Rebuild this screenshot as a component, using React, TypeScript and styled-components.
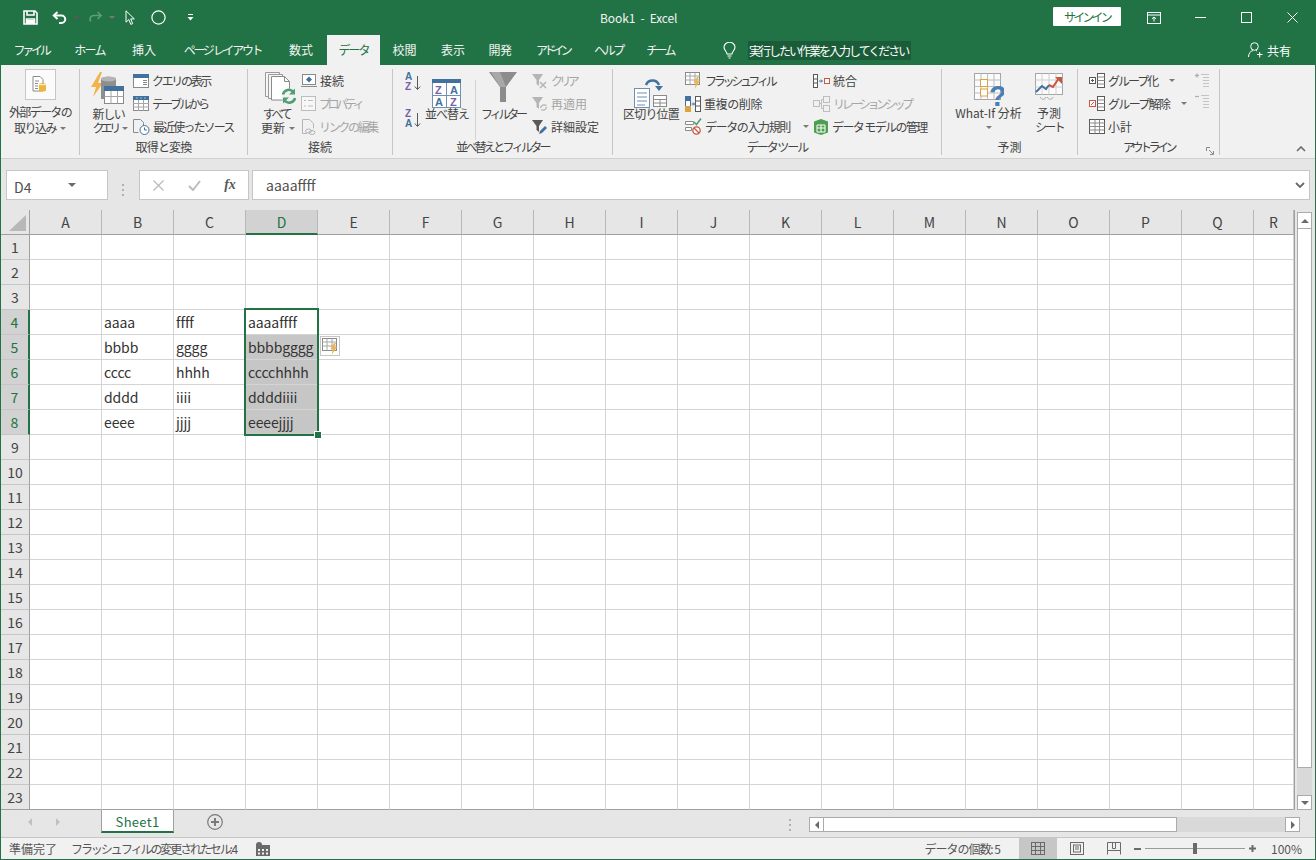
import React from "react";
import styled, { createGlobalStyle } from "styled-components";

const GREEN = "#217346";
const INK = "#444444";
const OFF = "#a6a6a6";

const Global = createGlobalStyle`
  html, body { margin: 0; padding: 0; background: #fff; }
  * { box-sizing: border-box; }
  body { font-family: "Noto Sans CJK JP", "Noto Sans", sans-serif; font-size: 12px; color: ${INK}; overflow: hidden; }
  svg { display: block; flex: none; }
`;

// squeezes the CJK fallback down to the narrow kana widths of the original UI font
const track = (text: string, target: number) => {
  let natural = 0;
  for (const ch of text) natural += ch === " " ? 3 : ch.charCodeAt(0) < 128 ? 6.6 : 12;
  return (target - natural) / text.length;
};

const Txt = styled.span<{ $ls: number; $off?: boolean; $c?: string }>`
  letter-spacing: ${p => p.$ls.toFixed(2)}px;
  white-space: pre;
  color: ${p => (p.$off ? OFF : p.$c || "inherit")};
`;

const Fit: React.FC<{ t: string; w: number; off?: boolean; c?: string }> = ({ t, w, off, c }) => (
  <Txt $ls={track(t, w)} $off={off} $c={c}>{t}</Txt>
);

const Window = styled.div`
  width: 1316px;
  height: 860px;
  display: flex;
  flex-direction: column;
  border: 1px solid ${GREEN};
  border-top: 0;
  overflow: hidden;
  background: #e6e6e6;
`;

/* ---------- title bar ---------- */
const TitleBar = styled.div`
  height: 35px;
  background: ${GREEN};
  display: flex;
  align-items: center;
  color: #fff;
  flex: none;
`;
const Qat = styled.div`
  width: 599px;
  display: flex;
  align-items: center;
  padding-left: 22px;
`;
const QatSlot = styled.div<{ $w: number }>`
  width: ${p => p.$w}px;
  display: flex;
  align-items: center;
`;
const Title = styled.div`
  width: 82px;
  font-size: 12px;
  white-space: pre;
  letter-spacing: -0.1px;
  color: #f2f2f2;
`;
const TitleRight = styled.div`
  flex: 1;
  display: flex;
  justify-content: flex-end;
  align-items: center;
`;
const SignIn = styled.div`
  width: 68px;
  height: 19px;
  margin-right: 10px;
  background: #fff;
  border-radius: 1px;
  display: flex;
  align-items: center;
  justify-content: center;
  line-height: 19px;
  margin-top: -2px;
`;
const Caption = styled.div`
  width: 46px;
  height: 35px;
  display: flex;
  align-items: center;
  justify-content: center;
`;

/* ---------- tabs ---------- */
const TabRow = styled.div`
  height: 30px;
  background: ${GREEN};
  display: flex;
  flex: none;
  align-items: stretch;
  color: #fff;
`;
const Tab = styled.div<{ $w: number; $active?: boolean }>`
  width: ${p => p.$w}px;
  display: flex;
  align-items: center;
  justify-content: center;
  line-height: 30px;
  color: ${p => (p.$active ? GREEN : "#f4f4f4")};
  background: ${p => (p.$active ? "#f1f1f1" : "transparent")};
`;
const TellSlot = styled.div`
  display: flex;
  align-items: center;
  margin-left: 38px;
`;
const TellBox = styled.div`
  margin-left: 12px;
  width: 163px;
  height: 19px;
  line-height: 19px;
  background: #1a5c38;
  padding-left: 1px;
  color: #fff;
`;
const ShareSlot = styled.div`
  margin-left: auto;
  margin-right: 24px;
  display: flex;
  align-items: center;
  gap: 4px;
`;

/* ---------- ribbon ---------- */
const Ribbon = styled.div`
  height: 94px;
  flex: none;
  display: flex;
  background: #f1f1f1;
  border-bottom: 1px solid #d0d0d0;
  padding-top: 4px;
`;
const Group = styled.div<{ $w: number }>`
  width: ${p => p.$w}px;
  height: 86px;
  flex: none;
  border-right: 1px solid #c6c6c6;
  display: flex;
  flex-direction: column;
  position: relative;
`;
const GroupBody = styled.div<{ $pl?: number }>`
  height: 70px;
  display: flex;
  padding-left: ${p => p.$pl || 0}px;
`;
const GroupLabel = styled.div`
  height: 16px;
  line-height: 16px;
  margin-top: 0;
  text-align: center;
`;
const Launcher = styled.div`
  position: absolute;
  right: 5px;
  bottom: 0;
`;
const Large = styled.div<{ $w: number; $ml?: number; $iconH?: number }>`
  width: ${p => p.$w}px;
  margin-left: ${p => p.$ml || 0}px;
  display: flex;
  flex-direction: column;
  align-items: center;
  flex: none;
`;
const LargeIcon = styled.div<{ $h?: number; $pt?: number; $dx?: number }>`
  height: ${p => p.$h || 38}px;
  padding-top: ${p => p.$pt ?? 3}px;
  margin-left: ${p => p.$dx || 0}px;
`;
const LargeLine = styled.div<{ $dx?: number; $lh?: number }>`
  height: ${p => p.$lh || 14}px;
  line-height: ${p => p.$lh || 14}px;
  display: flex;
  align-items: center;
  gap: 4px;
  white-space: pre;
  margin-left: ${p => p.$dx || 0}px;
`;
const ImportBox = styled.div`
  width: 31px;
  height: 31px;
  background: #fbfbfb;
  border: 1px solid #c6c6c6;
  display: flex;
  align-items: center;
  justify-content: center;
  margin-bottom: 4px;
`;
const SmallCol = styled.div<{ $w?: number; $ml?: number }>`
  width: ${p => (p.$w ? `${p.$w}px` : "auto")};
  margin-left: ${p => p.$ml || 0}px;
  display: flex;
  flex-direction: column;
  padding-top: 0;
  flex: none;
`;
const SmallRow = styled.div`
  height: 23px;
  display: flex;
  align-items: center;
  gap: 3px;
  white-space: pre;
`;
const SortCol = styled.div`
  width: 16px;
  margin-left: 12px;
  margin-right: 4px;
  display: flex;
  flex-direction: column;
  gap: 15px;
  padding-top: 2px;
`;
const VRule = styled.div`
  width: 1px;
  height: 60px;
  margin: 11px 5px 0 6px;
  background: #d4d4d4;
`;
const MiniCol = styled.div`
  display: flex;
  flex-direction: column;
  gap: 7px;
  padding-top: 4px;
`;
const Arrow = styled.i<{ $ml?: number; $dark?: boolean }>`
  display: block;
  width: 0;
  height: 0;
  margin-left: ${p => p.$ml || 0}px;
  border-left: 3px solid transparent;
  border-right: 3px solid transparent;
  border-top: 3px solid ${p => (p.$dark ? "#595959" : "#7a7a7a")};
`;
const RibbonTail = styled.div`
  flex: 1;
  display: flex;
  justify-content: flex-end;
  align-items: flex-end;
  padding: 0 9px 3px 0;
  height: 86px;
`;

/* ---------- formula bar ---------- */
const FormulaBar = styled.div`
  height: 51px;
  flex: none;
  display: flex;
  padding: 11px 5px 0 5px;
  background: #e6e6e6;
`;
const FieldBox = styled.div<{ $w?: number }>`
  width: ${p => (p.$w ? `${p.$w}px` : "auto")};
  flex: ${p => (p.$w ? "none" : 1)};
  height: 30px;
  background: #fff;
  border: 1px solid #c6c6c6;
  display: flex;
  align-items: center;
`;
const NameText = styled.div`
  font-size: 14px;
  line-height: 30px;
  padding: 3px 0 0 7px;
  flex: 1;
  color: #505050;
`;
const Grip = styled.div`
  width: 31px;
  display: flex;
  justify-content: center;
  align-items: center;
`;
const FxSlot = styled.div<{ $w: number }>`
  width: ${p => p.$w}px;
  display: flex;
  justify-content: center;
`;
const FxGlyph = styled.span`
  font-family: "Liberation Serif", serif;
  font-style: italic;
  font-size: 14px;
  font-weight: 700;
  color: #595959;
  line-height: 18px;
`;
const FormulaText = styled.div`
  flex: 1;
  font-size: 14px;
  line-height: 30px;
  padding: 0 0 0 13px;
  color: #505050;
`;

/* ---------- sheet ---------- */
const SheetArea = styled.div`
  height: 600px;
  flex: none;
  display: flex;
  background: #e6e6e6;
`;
const Grid = styled.div`
  width: 1294px;
  flex: none;
  position: relative;
  overflow: hidden;
  display: grid;
  grid-template-columns: 29px repeat(17, 72px) 40px;
  grid-template-rows: 25px repeat(23, 25px);
  font-size: 14px;
  background: #fff;
  border-right: 1px solid #a0a0a0;
`;
const Corner = styled.div`
  background: #e6e6e6;
  border-right: 1px solid #a0a0a0;
  border-bottom: 1px solid #a0a0a0;
  display: flex;
  align-items: flex-end;
  justify-content: flex-end;
  padding: 0 3px 3px 0;
`;
const ColHead = styled.div<{ $sel?: boolean }>`
  background: ${p => (p.$sel ? "#d2d2d2" : "#e6e6e6")};
  color: ${p => (p.$sel ? GREEN : "#444")};
  border-right: 1px solid #b8b8b8;
  border-bottom: ${p => (p.$sel ? `2px solid ${GREEN}` : "1px solid #a0a0a0")};
  text-align: center;
  line-height: 24px;
  height: 25px;
`;
const RowHead = styled.div<{ $sel?: boolean; $last?: boolean }>`
  background: ${p => (p.$sel ? "#d2d2d2" : "#e6e6e6")};
  color: ${p => (p.$sel ? GREEN : "#444")};
  border-right: ${p => (p.$sel ? `2px solid ${GREEN}` : "1px solid #a0a0a0")};
  border-bottom: 1px solid ${p => (p.$last ? "#a0a0a0" : "#c6c6c6")};
  text-align: center;
  line-height: 24px;
`;
const Cell = styled.div<{ $fill?: boolean; $last?: boolean }>`
  background: ${p => (p.$fill ? "#c6c6c6" : "#fff")};
  border-right: 1px solid #d4d4d4;
  border-bottom: 1px solid ${p => (p.$last ? "#a0a0a0" : "#d4d4d4")};
  padding-left: 2px;
  line-height: 25px;
  color: #333;
  overflow: visible;
  white-space: pre;
  letter-spacing: -0.1px;
`;
const Selection = styled.div`
  position: absolute;
  left: 243px;
  top: 98px;
  width: 75px;
  height: 128px;
  border: 2px solid ${GREEN};
  pointer-events: none;
`;
const Handle = styled.div`
  position: absolute;
  right: -4px;
  bottom: -4px;
  width: 6px;
  height: 6px;
  background: ${GREEN};
  border: 1px solid #fff;
  box-sizing: content-box;
  margin: -1px;
`;
const FlashTag = styled.div`
  position: absolute;
  left: 319px;
  top: 126px;
  width: 20px;
  height: 20px;
  background: #fff;
  border: 1px solid #c6c6c6;
  display: flex;
  align-items: center;
  justify-content: center;
`;
const VScroll = styled.div`
  width: 15px;
  margin-left: 2px;
  padding-top: 2px;
  display: flex;
  flex-direction: column;
`;
const ScrollBtn = styled.div<{ $w?: number; $h?: number }>`
  width: ${p => p.$w || 15}px;
  height: ${p => p.$h || 15}px;
  background: #fff;
  border: 1px solid #ababab;
  display: flex;
  align-items: center;
  justify-content: center;
  flex: none;
`;
const VThumb = styled.div`
  height: 539px;
  background: #fff;
  border: 1px solid #ababab;
  border-top: 0;
  flex: none;
`;
const VTrack = styled.div`
  flex: 1;
  background: #d9d9d9;
`;
const Tri = styled.i<{ $dir: "up" | "down" | "left" | "right"; $c?: string }>`
  display: block;
  width: 0;
  height: 0;
  border-style: solid;
  border-color: transparent;
  ${p => {
    const c = p.$c || "#6a6a6a";
    if (p.$dir === "up") return `border-width:0 4px 4px 4px;border-bottom-color:${c};`;
    if (p.$dir === "down") return `border-width:4px 4px 0 4px;border-top-color:${c};`;
    if (p.$dir === "left") return `border-width:4px 4px 4px 0;border-right-color:${c};`;
    return `border-width:4px 0 4px 4px;border-left-color:${c};`;
  }}
`;

/* ---------- sheet tabs ---------- */
const TabStrip = styled.div`
  height: 28px;
  flex: none;
  display: flex;
  align-items: flex-start;
  background: #e6e6e6;
  border-bottom: 1px solid #c6c6c6;
`;
const NavSlot = styled.div`
  width: 100px;
  height: 24px;
  display: flex;
  align-items: center;
  padding-left: 27px;
  gap: 24px;
`;
const SheetTab = styled.div`
  width: 73px;
  height: 24px;
  background: #fff;
  border-bottom: 2px solid ${GREEN};
  border-left: 1px solid #a0a0a0;
  border-right: 1px solid #a0a0a0;
  color: ${GREEN};
  font-size: 13px;
  line-height: 25px;
  letter-spacing: 0.3px;
  text-align: center;
  margin-top: -1px;
`;
const AddSlot = styled.div`
  width: 614px;
  height: 24px;
  padding-left: 33px;
  display: flex;
  align-items: center;
`;
const HScroll = styled.div`
  margin-top: 7px;
  width: 491px;
  height: 15px;
  margin-left: 17px;
  display: flex;
  background: #d9d9d9;
`;
const HThumb = styled.div`
  width: 353px;
  background: #fff;
  border: 1px solid #ababab;
  border-left: 0;
`;
const HGap = styled.div`
  flex: 1;
`;
const DotGrip = styled.div`
  height: 24px;
  display: flex;
  align-items: center;
  padding-top: 7px;
  margin-left: 1px;
`;

/* ---------- status bar ---------- */
const StatusBar = styled.div`
  flex: 1;
  display: flex;
  align-items: center;
  background: #f1f1f1;
  padding-left: 8px;
  color: #555;
`;
const StatusMsg = styled.div`
  margin-left: 14px;
  margin-right: 20px;
`;
const StatusCount = styled.div`
  margin-left: auto;
  margin-right: 19px;
`;
const ViewBtn = styled.div<{ $on?: boolean; $w: number }>`
  width: ${p => p.$w}px;
  height: 21px;
  background: ${p => (p.$on ? "#c6c6c6" : "transparent")};
  display: flex;
  align-items: center;
  justify-content: center;
`;
const ZoomBox = styled.div`
  width: 129px;
  margin-left: 2px;
  display: flex;
  align-items: center;
`;
const ZoomTrack = styled.div`
  width: 100px;
  height: 1px;
  background: #9a9a9a;
  margin: 0 4px;
  position: relative;
`;
const ZoomThumb = styled.div`
  position: absolute;
  left: 48px;
  top: -5px;
  width: 4px;
  height: 11px;
  background: #6a6a6a;
`;
const ZoomPct = styled.div`
  width: 52px;
  padding-left: 8px;
  font-size: 12px;
`;

/* ---------- icons ---------- */
const SaveIcon = () => (
  <svg width="15" height="15" viewBox="0 0 15 15" fill="none" stroke="#fff" strokeWidth="1.6">
    <path d="M1 1h11l2 2v11H1z" />
    <path d="M4 1v4h7V1M3.5 14V9h8v5" fill="none" />
    <path d="M3 10h9v4H3z" fill="#fff" stroke="none" />
  </svg>
);
const UndoIcon = ({ c = "#fff" }: { c?: string }) => (
  <svg width="15" height="13" viewBox="0 0 15 13" fill="none" stroke={c} strokeWidth="2">
    <path d="M5.5 1 1.8 4.5 5.5 8" />
    <path d="M2 4.5h7.5a3.6 3.6 0 0 1 0 7.5H7" />
  </svg>
);
const RedoIcon = () => (
  <svg width="15" height="13" viewBox="0 0 15 13" fill="none" stroke="#5f9c7d" strokeWidth="1.6">
    <path d="M9.5 1 13.2 4.5 9.5 8" />
    <path d="M13 4.5H6a3.6 3.6 0 0 0-3 6" />
  </svg>
);
const CursorIcon = () => (
  <svg width="11" height="16" viewBox="0 0 11 16" fill="none" stroke="#fff" strokeWidth="1">
    <path d="M1 .8v11.4l2.8-2.6 2 4.8 1.9-.8-2-4.7h3.6z" />
  </svg>
);
const CircleIcon = () => (
  <svg width="15" height="15" viewBox="0 0 15 15" fill="none" stroke="#fff" strokeWidth="1.2">
    <circle cx="7.5" cy="7.5" r="6.6" />
  </svg>
);
const CustomizeIcon = () => (
  <svg width="7" height="7" viewBox="0 0 7 7" fill="#fff">
    <rect x="1" y="0" width="5" height="1" />
    <path d="M0.5 3h6L3.5 6.5z" />
  </svg>
);
const RibbonModeIcon = () => (
  <svg width="14" height="12" viewBox="0 0 14 12" fill="none" stroke="#fff">
    <rect x=".5" y=".5" width="13" height="11" />
    <path d="M.5 3h13M7 9.5V5M5 6.8 7 5l2 1.8" />
  </svg>
);
const MinIcon = () => (
  <svg width="11" height="3" viewBox="0 0 11 3" stroke="#fff"><path d="M0 1.5h11" /></svg>
);
const MaxIcon = () => (
  <svg width="11" height="11" viewBox="0 0 11 11" fill="none" stroke="#fff"><rect x=".5" y=".5" width="10" height="10" /></svg>
);
const CloseIcon = () => (
  <svg width="11" height="11" viewBox="0 0 11 11" fill="none" stroke="#fff"><path d="M.5.5l10 10M10.5.5l-10 10" /></svg>
);
const BulbIcon = () => (
  <svg width="13" height="17" viewBox="0 0 13 17" fill="none" stroke="#fff" strokeWidth="1.1">
    <path d="M4 12c0-2.5-3-3.6-3-6.7a5.5 5 0 0 1 11 0C12 8.400 9 9.500 9 12z" />
    <path d="M4.500 14h4M5.500 16h2" />
  </svg>
);
const ShareIcon = () => (
  <svg width="15" height="16" viewBox="0 0 15 16" fill="none" stroke="#fff" strokeWidth="1">
    <circle cx="6.500" cy="4.500" r="3.800" />
    <path d="M.5 15c0-3.500 2-6 4.500-6.500M8 8.500l1 .4M9 12.500h5.500M11.700 10v5.500" />
  </svg>
);
const ImportIcon = () => (
  <svg width="16" height="17" viewBox="0 0 16 17" fill="none">
    <path d="M1 .5h7l3 3V15H1z" fill="#fff" stroke="#8a8a8a" />
    <path d="M3 5h4M3 7.500h3M3 10h3M3 12.500h3" stroke="#8a8a8a" />
    <path d="M7 8c0-1 7-1 7 0v6.500c0 1.200-7 1.200-7 0z" fill="#f2b33d" />
    <path d="M7 8c0 1 7 1 7 0" stroke="#fff" />
  </svg>
);
const NewQueryIcon = () => (
  <svg width="33" height="34" viewBox="0 0 33 34" fill="none">
    <path d="M9 0 0 15h5l-3 10 10-14H7l4-11z" fill="#f0b44a" />
    <path d="M10 7c0-3 15-3 15 0v20H10z" fill="#8f8f8f" />
    <ellipse cx="17.500" cy="7" rx="7.500" ry="2.500" fill="#b5b5b5" />
    <rect x="13.500" y="14.500" width="19" height="17" fill="#fff" stroke="#8a8a8a" />
    <rect x="13" y="14" width="20" height="5" fill="#41719c" />
    <path d="M13.500 24.500h19M20 19v12.500M26.500 19v12.500" stroke="#a6a6a6" />
  </svg>
);
const ShowQueryIcon = () => (
  <svg width="16" height="14" viewBox="0 0 16 14" fill="none">
    <rect x=".5" y=".5" width="15" height="13" fill="#fff" stroke="#8a8a8a" />
    <rect x="0" y="0" width="16" height="4" fill="#41719c" />
    <path d="M10 6.500h4M10 8.500h4M10 10.500h4" stroke="#8a8a8a" />
  </svg>
);
const FromTableIcon = () => (
  <svg width="16" height="15" viewBox="0 0 16 15" fill="none">
    <rect x=".5" y=".5" width="15" height="14" fill="#fff" stroke="#8a8a8a" />
    <rect x="0" y="0" width="16" height="4" fill="#41719c" />
    <path d="M3.500 2h1M7.500 2h1M11.500 2h1" stroke="#fff" />
    <path d="M0 7.500h16M0 11h16M5.500 4v11M10.500 4v11" stroke="#a6a6a6" />
  </svg>
);
const RecentIcon = () => (
  <svg width="17" height="16" viewBox="0 0 17 16" fill="none">
    <path d="M.5.5h7l3 3v5M.5.5v13h5" stroke="#8a8a8a" />
    <circle cx="11.500" cy="11" r="4.500" fill="#fff" stroke="#41719c" />
    <path d="M11.500 8.500V11h2.300" stroke="#41719c" />
  </svg>
);
const RefreshAllIcon = () => (
  <svg width="31" height="34" viewBox="0 0 31 34" fill="none">
    <path d="M.5.5h14v24H.5z" fill="#f6f6f6" stroke="#9a9a9a" />
    <path d="M3.500 2.500h14v24h-14z" fill="#f6f6f6" stroke="#9a9a9a" />
    <path d="M6.500 4.500h13l5 5V28h-18z" fill="#fff" stroke="#8a8a8a" />
    <path d="M19.500 4.500v5h5" stroke="#8a8a8a" />
    <circle cx="24" cy="24" r="7.500" fill="#f1f1f1" />
    <path d="M18 22.500a6 6 0 0 1 10.500-2.500M30 26a6 6 0 0 1-10.500 2.500" stroke="#4f9e76" strokeWidth="2.600" />
    <path d="M30 16.500v6h-6zM18 31.500v-6h6z" fill="#4f9e76" />
  </svg>
);
const ConnIcon = () => (
  <svg width="16" height="14" viewBox="0 0 16 14" fill="none">
    <rect x="1.500" y=".5" width="13" height="10" fill="#fff" stroke="#8a8a8a" />
    <path d="M0 12.500h16" stroke="#8a8a8a" />
    <path d="M8 2.500 11 5.500 8 8.500 5 5.500z" fill="#41719c" />
  </svg>
);
const PropsIcon = () => (
  <svg width="15" height="15" viewBox="0 0 15 15" fill="none" stroke="#bdbdbd">
    <rect x=".5" y=".5" width="14" height="14" fill="#f7f7f7" />
    <path d="M3 4.500h2M7 4.500h5M3 10h2M7 10h5" />
  </svg>
);
const EditLinksIcon = () => (
  <svg width="15" height="16" viewBox="0 0 15 16" fill="none" stroke="#b5b5b5">
    <path d="M6 14.500H1.500V.5h7l4 4v5" />
    <ellipse cx="7.500" cy="12" rx="3" ry="2" />
    <ellipse cx="11" cy="13.500" rx="3" ry="2" />
  </svg>
);
const SortAz = ({ flip }: { flip?: boolean }) => {
  const top = flip ? "Z" : "A";
  const bot = flip ? "A" : "Z";
  return (
    <svg width="16" height="22" viewBox="0 0 16 22" fill="none">
      <text x="0" y="9" fontFamily="Liberation Sans" fontSize="10" fontWeight="700" fill={flip ? "#7a5ea8" : "#41719c"}>{top}</text>
      <text x="0" y="19" fontFamily="Liberation Sans" fontSize="10" fontWeight="700" fill={flip ? "#41719c" : "#7a5ea8"}>{bot}</text>
      <path d="M12.500 5v13M9.800 15.500l2.700 3 2.700-3" stroke="#595959" />
    </svg>
  );
};
const SortBigIcon = () => (
  <svg width="30" height="29" viewBox="0 0 30 29" fill="none">
    <rect x=".5" y=".5" width="28" height="28" fill="#fff" stroke="#6f8fb5" />
    <rect x="0" y="0" width="29" height="4" fill="#41719c" />
    <path d="M14.500 4v25M0 16.500h29" stroke="#6f8fb5" />
    <text x="3" y="14.500" fontFamily="Liberation Sans" fontSize="11" fontWeight="700" fill="#7a5ea8">Z</text>
    <text x="18" y="14.500" fontFamily="Liberation Sans" fontSize="11" fontWeight="700" fill="#41719c">A</text>
    <text x="3" y="27" fontFamily="Liberation Sans" fontSize="11" fontWeight="700" fill="#41719c">A</text>
    <text x="18" y="27" fontFamily="Liberation Sans" fontSize="11" fontWeight="700" fill="#7a5ea8">Z</text>
  </svg>
);
const FunnelIcon = () => (
  <svg width="28" height="30" viewBox="0 0 28 30">
    <path d="M0 0h28L17 15v15h-6V15z" fill="#8c8c8c" />
    <path d="M2 0h9l6 15h-6z" fill="#a8a8a8" />
  </svg>
);
const FilterSmall = ({ kind }: { kind: "clear" | "reapply" | "adv" }) => {
  const c = kind === "adv" ? "#595959" : "#b5b5b5";
  return (
    <svg width="16" height="16" viewBox="0 0 16 16" fill="none">
      <path d="M0 1h11L7 7v6L4.500 11V7z" fill={c} />
      {kind === "clear" && <path d="M8 9l6 6M14 9l-6 6" stroke="#b5b5b5" strokeWidth="1.500" />}
      {kind === "reapply" && <path d="M8.500 12a3.500 3.500 0 0 1 6-2M14.500 11a3.500 3.500 0 0 1-5.500 2.500" stroke="#b5b5b5" strokeWidth="1.300" />}
      {kind === "adv" && <path d="M7 15l1-3 5-5 2 2-5 5z" fill="#41719c" />}
    </svg>
  );
};
const TextToColsIcon = () => (
  <svg width="33" height="31" viewBox="0 0 33 31" fill="none">
    <path d="M12 8a7 7 0 0 1 13 0" stroke="#41719c" strokeWidth="2.500" />
    <path d="M21 9h8l-4 5z" fill="#41719c" />
    <rect x=".5" y="11.500" width="15" height="19" fill="#fff" stroke="#6f8fb5" />
    <path d="M3 16h10M3 20h10M3 24h10M3 28h8" stroke="#6f8fb5" />
    <rect x="19.500" y="18.500" width="13" height="11" fill="#fff" stroke="#8a8a8a" />
    <path d="M19.500 22.500h13M26 22.500v7M19.500 26h13" stroke="#8a8a8a" />
  </svg>
);
const FlashFillIcon = () => (
  <svg width="17" height="17" viewBox="0 0 17 17" fill="none">
    <rect x=".5" y=".5" width="14" height="12" fill="#fff" stroke="#8a8a8a" />
    <path d="M.5 4h14M.5 8h14M5 .5v12M10 .5v12" stroke="#a6a6a6" />
    <path d="M12 5 8.500 11h2.500l-1.500 6 5.500-8H12l2-4z" fill="#f0b44a" />
  </svg>
);
const DupIcon = () => (
  <svg width="16" height="16" viewBox="0 0 16 16" fill="none">
    <rect x=".5" y=".5" width="5" height="15" fill="#fff" stroke="#41719c" />
    <rect x="0" y="0" width="6" height="5" fill="#41719c" />
    <rect x="0" y="10" width="6" height="6" fill="#d9a441" />
    <rect x="10.500" y=".5" width="5" height="15" fill="#fff" stroke="#595959" />
    <path d="M6.500 8h3M8 6.500 9.500 8 8 9.500" stroke="#41719c" />
    <path d="M10.500 5h5M10.500 10h5" stroke="#595959" />
  </svg>
);
const ValidateIcon = () => (
  <svg width="17" height="17" viewBox="0 0 17 17" fill="none">
    <path d="M.5 3.500h8v3h-8zM.5 9.500h6v3h-6z" fill="#fff" stroke="#8a8a8a" />
    <path d="M9 4l2.500 2.500L16 .5" stroke="#4f9e76" strokeWidth="1.500" />
    <circle cx="11.500" cy="12.500" r="3.700" fill="#fff" stroke="#c8553d" strokeWidth="1.300" />
    <path d="M9 10l5 5" stroke="#c8553d" strokeWidth="1.300" />
  </svg>
);
const ConsolidateIcon = () => (
  <svg width="17" height="16" viewBox="0 0 17 16" fill="none">
    <rect x=".5" y="1.500" width="4" height="13" fill="#fff" stroke="#595959" />
    <path d="M.5 6h4M.5 10h4" stroke="#595959" />
    <path d="M6 8h3M8 6.500 9.500 8 8 9.500" stroke="#41719c" />
    <rect x="11.500" y="5.500" width="5" height="5" fill="#fff" stroke="#c8553d" />
  </svg>
);
const RelationIcon = () => (
  <svg width="17" height="16" viewBox="0 0 17 16" fill="none" stroke="#bdbdbd">
    <rect x=".5" y="4.500" width="6" height="6" />
    <rect x="10.500" y=".5" width="6" height="6" />
    <rect x="10.500" y="9.500" width="6" height="6" />
    <path d="M6.500 7.500h2v-4h2M8.500 7.500v5h2" />
  </svg>
);
const ModelIcon = () => (
  <svg width="16" height="16" viewBox="0 0 16 16" fill="none">
    <path d="M8 0l7 2.500v11L8 16l-7-2.500v-11z" fill="#4f9e50" />
    <path d="M4 6h8v7H4zM4 9h8M8 6v7" stroke="#fff" />
  </svg>
);
const WhatIfIcon = () => (
  <svg width="30" height="37" viewBox="0 0 30 37" fill="none">
    <rect x=".5" y=".5" width="26" height="26" fill="#fbfbfb" stroke="#a6a6a6" />
    <path d="M7 .5v26M13.500 .5v26M20 .5v26M.5 7h26M.5 13.500h26M.5 20h26" stroke="#bdbdbd" />
    <rect x="6.500" y="6.500" width="7" height="7" fill="#fff" stroke="#d9a441" />
    <rect x="6.500" y="16" width="7" height="7" fill="#fff" stroke="#d9a441" />
    <text x="15" y="33" fontFamily="Liberation Sans" fontSize="29" fontWeight="700" fill="#4a7fb5">?</text>
  </svg>
);
const ForecastIcon = () => (
  <svg width="29" height="28" viewBox="0 0 29 28" fill="none">
    <rect x=".5" y=".5" width="27" height="21" fill="#fbfbfb" stroke="#a6a6a6" />
    <path d="M7 .5v21M14 .5v21M21 .5v21M.5 7h27M.5 14h27" stroke="#cfcfcf" />
    <path d="M1 19l6-6 4 3 3-4" stroke="#41719c" strokeWidth="2" />
    <path d="M14 12l4 2 6-9" stroke="#c8553d" strokeWidth="2" />
    <path d="M20 4h7v7z" fill="#c8553d" />
    <path d="M5 24c2 3 5 3 6 0M12 24c2 3 5 3 6 0" stroke="#a6a6a6" />
  </svg>
);
const OutlineIcon = ({ kind }: { kind: "group" | "ungroup" | "sub" }) => (
  <svg width="16" height="15" viewBox="0 0 16 15" fill="none">
    {kind !== "sub" ? (
      <>
        <rect x=".5" y="4.500" width="6" height="6" fill={kind === "ungroup" ? "#fff" : "#fff"} stroke={kind === "ungroup" ? "#c8553d" : "#595959"} />
        {kind === "group" ? <path d="M2 7.500h3M3.500 6v3" stroke="#595959" /> : <path d="M2 9l3-3" stroke="#c8553d" />}
        <rect x="8.500" y=".5" width="7" height="14" fill="#fff" stroke="#595959" />
        <path d="M8.500 4h7M8.500 7.500h7M8.500 11h7" stroke="#8a8a8a" />
      </>
    ) : (
      <>
        <rect x=".5" y=".5" width="15" height="14" fill="#fff" stroke="#595959" />
        <path d="M.5 4h15M.5 7.500h15M.5 11h15M6 .5v14M10.500 .5v14" stroke="#8a8a8a" />
      </>
    )}
  </svg>
);
const DetailIcon = () => (
  <svg width="15" height="14" viewBox="0 0 15 14" fill="none" stroke="#c4c4c4">
    <path d="M7 1.500h8M9 4.500h6M9 7.500h6M9 10.500h6M9 13.500h6" />
    <path d="M1 2.500h4M3 .5v4" stroke="#b0b0b0" strokeWidth="1.300" />
  </svg>
);
const HideIcon = () => (
  <svg width="15" height="14" viewBox="0 0 15 14" fill="none" stroke="#c4c4c4">
    <path d="M7 1.500h8M9 4.500h6M9 7.500h6M9 10.500h6M9 13.500h6" />
    <path d="M1 2.500h4" stroke="#b0b0b0" strokeWidth="1.300" />
  </svg>
);
const LauncherIcon = () => (
  <svg width="8" height="8" viewBox="0 0 8 8" fill="none" stroke="#8a8a8a">
    <path d="M.5 4V.5H4M3 3l4 4M7.500 4v3.500H4" />
  </svg>
);
const ChevronUp = ({ c = "#6a6a6a" }: { c?: string }) => (
  <svg width="10" height="6" viewBox="0 0 10 6" fill="none" stroke={c} strokeWidth="1.600"><path d="M1 5l4-4 4 4" /></svg>
);
const ChevronDown = ({ c = "#6a6a6a" }: { c?: string }) => (
  <svg width="10" height="6" viewBox="0 0 10 6" fill="none" stroke={c} strokeWidth="1.800"><path d="M1 1l4 4 4-4" /></svg>
);
const GripIcon = () => (
  <svg width="3" height="13" viewBox="0 0 3 13" fill="#b0b0b0">
    <rect width="2" height="2" y="0" /><rect width="2" height="2" y="5" /><rect width="2" height="2" y="10" />
  </svg>
);
const XIcon = () => (
  <svg width="11" height="11" viewBox="0 0 11 11" fill="none" stroke="#bdbdbd" strokeWidth="1.400"><path d="M.5.5l10 10M10.500.5l-10 10" /></svg>
);
const CheckIcon = () => (
  <svg width="13" height="11" viewBox="0 0 13 11" fill="none" stroke="#bdbdbd" strokeWidth="2"><path d="M1 6l4 4 7-9" /></svg>
);
const CornerIcon = () => (
  <svg width="17" height="16" viewBox="0 0 17 16"><path d="M17 0v16H0z" fill="#b8b8b8" /></svg>
);
const AddIcon = () => (
  <svg width="16" height="16" viewBox="0 0 16 16" fill="none" stroke="#7a7a7a">
    <circle cx="8" cy="8" r="7.300" strokeWidth="1.200" />
    <path d="M8 4v8M4 8h8" strokeWidth="2" />
  </svg>
);
const MacroIcon = () => (
  <svg width="14" height="14" viewBox="0 0 14 14">
    <rect x="0" y="3" width="14" height="11" fill="#6a6a6a" />
    <circle cx="3" cy="3" r="3" fill="#6a6a6a" />
    <path d="M2 7h2v2H2zM6 7h2v2H6zM10 7h2v2h-2zM2 10.500h2v2H2zM6 10.500h2v2H6zM10 10.500h2v2h-2z" fill="#f1f1f1" />
  </svg>
);
const NormalView = () => (
  <svg width="14" height="13" viewBox="0 0 14 13" fill="none" stroke="#6a6a6a">
    <rect x=".5" y=".5" width="13" height="12" />
    <path d="M.5 4.500h13M.5 8.500h13M4.500 .5v12M9.500 .5v12" />
  </svg>
);
const LayoutView = () => (
  <svg width="14" height="13" viewBox="0 0 14 13" fill="none" stroke="#6a6a6a">
    <rect x=".5" y=".5" width="13" height="12" />
    <rect x="3.500" y="3" width="7" height="7" />
    <path d="M5 5h4M5 7h4" />
  </svg>
);
const BreakView = () => (
  <svg width="14" height="13" viewBox="0 0 14 13" fill="none" stroke="#6a6a6a">
    <path d="M.5 8.500V.5h13v8M.5 12.500v-4h13v4" />
    <path d="M5.500 .5v6h3v-6" />
  </svg>
);
const SmallMinus = () => (
  <svg width="7" height="2" viewBox="0 0 7 2"><rect width="7" height="2" fill="#6a6a6a" /></svg>
);
const SmallPlus = () => (
  <svg width="7" height="7" viewBox="0 0 7 7" fill="#6a6a6a"><rect y="2.500" width="7" height="2" /><rect x="2.500" width="2" height="7" /></svg>
);

/* ---------- data ---------- */
const TABS: [string, number, number][] = [
  ["ファイル", 60, 35], ["ホーム", 57, 31], ["挿入", 52, 24], ["ページ レイアウト", 105, 78], ["数式", 52, 24],
  ["データ", 53, 30], ["校閲", 49, 24], ["表示", 48, 24], ["開発", 46, 23], ["アドイン", 59, 33], ["ヘルプ", 53, 29], ["チーム", 50, 28],
];
const COLS = "ABCDEFGHIJKLMNOPQR".split("");
const DATA: Record<string, string> = {
  B4: "aaaa", C4: "ffff", D4: "aaaaffff",
  B5: "bbbb", C5: "gggg", D5: "bbbbgggg",
  B6: "cccc", C6: "hhhh", D6: "cccchhhh",
  B7: "dddd", C7: "iiii", D7: "ddddiiii",
  B8: "eeee", C8: "jjjj", D8: "eeeejjjj",
};

const Sheet = () => (
  <Grid>
    <Corner><CornerIcon /></Corner>
    {COLS.map(c => <ColHead key={c} $sel={c === "D"}>{c}</ColHead>)}
    {Array.from({ length: 23 }, (_, i) => i + 1).map(r => (
      <React.Fragment key={r}>
        <RowHead $sel={r >= 4 && r <= 8} $last={r === 23}>{r}</RowHead>
        {COLS.map(c => (
          <Cell key={c} $fill={c === "D" && r >= 5 && r <= 8} $last={r === 23}>{DATA[`${c}${r}`]}</Cell>
        ))}
      </React.Fragment>
    ))}
    <Selection><Handle /></Selection>
    <FlashTag><FlashFillIcon /></FlashTag>
  </Grid>
);

const App = () => (
  <>
    <Global />
    <Window>
      <TitleBar>
        <Qat>
          <QatSlot $w={29}><SaveIcon /></QatSlot>
          <QatSlot $w={22}><UndoIcon /></QatSlot>
          <QatSlot $w={14}><Arrow $dark /></QatSlot>
          <QatSlot $w={21}><RedoIcon /></QatSlot>
          <QatSlot $w={16}><Arrow /></QatSlot>
          <QatSlot $w={26}><CursorIcon /></QatSlot>
          <QatSlot $w={36}><CircleIcon /></QatSlot>
          <QatSlot $w={10}><CustomizeIcon /></QatSlot>
        </Qat>
        <Title>Book1  -  Excel</Title>
        <TitleRight>
          <SignIn><Fit t="サインイン" w={46} c={GREEN} /></SignIn>
          <Caption><RibbonModeIcon /></Caption>
          <Caption><MinIcon /></Caption>
          <Caption><MaxIcon /></Caption>
          <Caption><CloseIcon /></Caption>
        </TitleRight>
      </TitleBar>

      <TabRow>
        {TABS.map(([t, w, tw]) => (
          <Tab key={t} $w={w} $active={t === "データ"}><Fit t={t} w={tw} /></Tab>
        ))}
        <TellSlot>
          <BulbIcon />
          <TellBox><Fit t="実行したい作業を入力してください" w={160} /></TellBox>
        </TellSlot>
        <ShareSlot>
          <ShareIcon />
          <Fit t="共有" w={24} />
        </ShareSlot>
      </TabRow>

      <Ribbon>
        <Group $w={79}>
          <GroupBody>
            <Large $w={78}>
              <ImportBox><ImportIcon /></ImportBox>
              <LargeLine $lh={16}><Fit t="外部データの" w={62} /></LargeLine>
              <LargeLine $lh={16}><Fit t="取り込み" w={42} /><Arrow /></LargeLine>
            </Large>
          </GroupBody>
        </Group>

        <Group $w={168}>
          <GroupBody $pl={6}>
            <Large $w={45}>
              <LargeIcon $dx={-2}><NewQueryIcon /></LargeIcon>
              <LargeLine><Fit t="新しい" w={32} /></LargeLine>
              <LargeLine $dx={3}><Fit t="クエリ" w={25} /><Arrow /></LargeLine>
            </Large>
            <SmallCol $ml={2}>
              <SmallRow><ShowQueryIcon /><Fit t="クエリの表示" w={58} /></SmallRow>
              <SmallRow><FromTableIcon /><Fit t="テーブルから" w={56} /></SmallRow>
              <SmallRow><RecentIcon /><Fit t="最近使ったソース" w={81} /></SmallRow>
            </SmallCol>
          </GroupBody>
          <GroupLabel><Fit t="取得と変換" w={56} /></GroupLabel>
        </Group>

        <Group $w={145}>
          <GroupBody $pl={4}>
            <Large $w={49}>
              <LargeIcon $dx={8}><RefreshAllIcon /></LargeIcon>
              <LargeLine><Fit t="すべて" w={29} /></LargeLine>
              <LargeLine $dx={3}><Fit t="更新" w={24} /><Arrow /></LargeLine>
            </Large>
            <SmallCol>
              <SmallRow><ConnIcon /><Fit t="接続" w={24} /></SmallRow>
              <SmallRow><PropsIcon /><Fit t="プロパティ" w={43} off /></SmallRow>
              <SmallRow><EditLinksIcon /><Fit t="リンクの編集" w={58} off /></SmallRow>
            </SmallCol>
          </GroupBody>
          <GroupLabel><Fit t="接続" w={24} /></GroupLabel>
        </Group>

        <Group $w={220}>
          <GroupBody>
            <SortCol><SortAz /><SortAz flip /></SortCol>
            <Large $w={44}>
              <LargeIcon $pt={10}><SortBigIcon /></LargeIcon>
              <LargeLine><Fit t="並べ替え" w={44} /></LargeLine>
            </Large>
            <VRule />
            <Large $w={44}>
              <LargeIcon><FunnelIcon /></LargeIcon>
              <LargeLine><Fit t="フィルター" w={44} /></LargeLine>
            </Large>
            <SmallCol $ml={7}>
              <SmallRow><FilterSmall kind="clear" /><Fit t="クリア" w={25} off /></SmallRow>
              <SmallRow><FilterSmall kind="reapply" /><Fit t="再適用" w={36} off /></SmallRow>
              <SmallRow><FilterSmall kind="adv" /><Fit t="詳細設定" w={48} /></SmallRow>
            </SmallCol>
          </GroupBody>
          <GroupLabel><Fit t="並べ替えとフィルター" w={93} /></GroupLabel>
        </Group>

        <Group $w={329}>
          <GroupBody $pl={10}>
            <Large $w={56}>
              <LargeIcon $h={38} $pt={8} $dx={-1}><TextToColsIcon /></LargeIcon>
              <LargeLine><Fit t="区切り位置" w={56} /></LargeLine>
            </Large>
            <SmallCol $w={128} $ml={6}>
              <SmallRow><FlashFillIcon /><Fit t="フラッシュ フィル" w={70} /></SmallRow>
              <SmallRow><DupIcon /><Fit t="重複の削除" w={58} /></SmallRow>
              <SmallRow><ValidateIcon /><Fit t="データの入力規則" w={85} /><Arrow $ml={10} /></SmallRow>
            </SmallCol>
            <SmallCol>
              <SmallRow><ConsolidateIcon /><Fit t="統合" w={24} /></SmallRow>
              <SmallRow><RelationIcon /><Fit t="リレーションシップ" w={78} off /></SmallRow>
              <SmallRow><ModelIcon /><Fit t="データ モデルの管理" w={95} /></SmallRow>
            </SmallCol>
          </GroupBody>
          <GroupLabel><Fit t="データ ツール" w={61} /></GroupLabel>
        </Group>

        <Group $w={136}>
          <GroupBody $pl={10}>
            <Large $w={73}>
              <LargeIcon $h={37} $pt={4}><WhatIfIcon /></LargeIcon>
              <LargeLine><Fit t="What-If 分析" w={73} /></LargeLine>
              <LargeLine><Arrow /></LargeLine>
            </Large>
            <Large $w={36} $ml={6}>
              <LargeIcon $h={37} $pt={4}><ForecastIcon /></LargeIcon>
              <LargeLine><Fit t="予測" w={24} /></LargeLine>
              <LargeLine><Fit t="シート" w={28} /></LargeLine>
            </Large>
          </GroupBody>
          <GroupLabel><Fit t="予測" w={24} /></GroupLabel>
        </Group>

        <Group $w={142}>
          <GroupBody $pl={11}>
            <SmallCol $w={105}>
              <SmallRow><OutlineIcon kind="group" /><Fit t="グループ化" w={50} /><Arrow $ml={9} /></SmallRow>
              <SmallRow><OutlineIcon kind="ungroup" /><Fit t="グループ解除" w={62} /><Arrow $ml={9} /></SmallRow>
              <SmallRow><OutlineIcon kind="sub" /><Fit t="小計" w={24} /></SmallRow>
            </SmallCol>
            <MiniCol><DetailIcon /><HideIcon /></MiniCol>
          </GroupBody>
          <GroupLabel><Fit t="アウトライン" w={51} /></GroupLabel>
          <Launcher><LauncherIcon /></Launcher>
        </Group>

        <RibbonTail><ChevronUp /></RibbonTail>
      </Ribbon>

      <FormulaBar>
        <FieldBox $w={102}>
          <NameText>D4</NameText>
          <Tri $dir="down" />
          <Grip />
        </FieldBox>
        <Grip><GripIcon /></Grip>
        <FieldBox $w={110}>
          <FxSlot $w={36}><XIcon /></FxSlot>
          <FxSlot $w={36}><CheckIcon /></FxSlot>
          <FxSlot $w={36}><FxGlyph>fx</FxGlyph></FxSlot>
        </FieldBox>
        <FieldBox style={{ marginLeft: 3 }}>
          <FormulaText>aaaaffff</FormulaText>
          <FxSlot $w={18}><ChevronDown /></FxSlot>
        </FieldBox>
      </FormulaBar>

      <SheetArea>
        <Sheet />
        <VScroll>
          <ScrollBtn $h={17}><Tri $dir="up" /></ScrollBtn>
          <VThumb />
          <VTrack />
          <ScrollBtn><Tri $dir="down" /></ScrollBtn>
        </VScroll>
      </SheetArea>

      <TabStrip>
        <NavSlot><Tri $dir="left" $c="#c0c0c0" /><Tri $dir="right" $c="#c0c0c0" /></NavSlot>
        <SheetTab>Sheet1</SheetTab>
        <AddSlot><AddIcon /></AddSlot>
        <DotGrip><GripIcon /></DotGrip>
        <HScroll>
          <ScrollBtn><Tri $dir="left" /></ScrollBtn>
          <HThumb />
          <HGap />
          <ScrollBtn><Tri $dir="right" /></ScrollBtn>
        </HScroll>
      </TabStrip>

      <StatusBar>
        <Fit t="準備完了" w={48} />
        <StatusMsg><Fit t="フラッシュ フィルの変更されたセル: 4" w={169} /></StatusMsg>
        <MacroIcon />
        <StatusCount><Fit t="データの個数: 5" w={79} /></StatusCount>
        <ViewBtn $on $w={38}><NormalView /></ViewBtn>
        <ViewBtn $w={39}><LayoutView /></ViewBtn>
        <ViewBtn $w={36}><BreakView /></ViewBtn>
        <ZoomBox>
          <SmallMinus />
          <ZoomTrack><ZoomThumb /></ZoomTrack>
          <SmallPlus />
        </ZoomBox>
        <ZoomPct>100%</ZoomPct>
      </StatusBar>
    </Window>
  </>
);

export default App;
